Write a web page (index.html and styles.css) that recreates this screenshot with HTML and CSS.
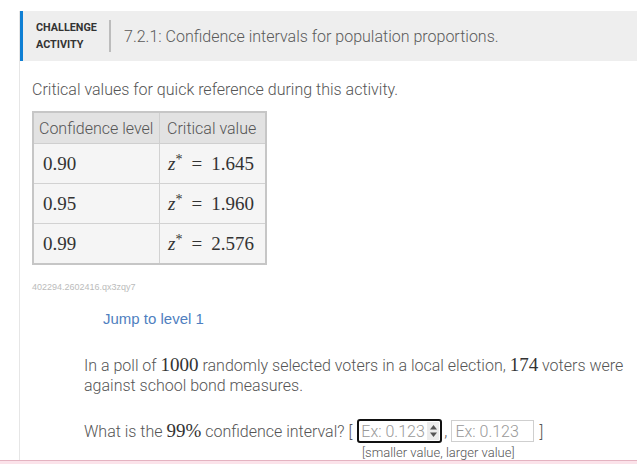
FILE: index.html
```html
<!DOCTYPE html>
<html>
<head>
<meta charset="utf-8">
<link rel="stylesheet" href="styles.css">
</head>
<body>
<div class="card">
  <div class="header">
    <div class="label">CHALLENGE<br>ACTIVITY</div>
    <div class="divider"></div>
    <div class="title">7.2.1: Confidence intervals for population proportions.</div>
  </div>
  <div class="content">
    <p class="intro">Critical values for quick reference during this activity.</p>
    <table class="crit">
      <thead>
        <tr><th class="c1">Confidence level</th><th class="c2">Critical value</th></tr>
      </thead>
      <tbody>
        <tr><td class="num">0.90</td><td class="num"><span class="mi">z</span><sup>*</sup><span class="eq">=</span>1.645</td></tr>
        <tr><td class="num">0.95</td><td class="num"><span class="mi">z</span><sup>*</sup><span class="eq">=</span>1.960</td></tr>
        <tr><td class="num">0.99</td><td class="num"><span class="mi">z</span><sup>*</sup><span class="eq">=</span>2.576</td></tr>
      </tbody>
    </table>
    <div class="ident">402294.2602416.qx3zqy7</div>
    <div class="jump">Jump to level 1</div>
    <div class="question">
      <p class="para">In a poll of <span class="m">1000</span> randomly selected voters in a local election, <span class="m">174</span> voters were against school bond measures.</p>
      <div class="ask">
        <span>What is the <span class="m">99%</span> confidence interval? [</span>
        <span class="inp focus"><span class="ph">Ex: 0.123</span><span class="spin"><svg width="9" height="14" viewBox="0 0 9 14"><path d="M4.5 1 L8 5.5 L1 5.5 Z" fill="#555"/><path d="M4.5 13 L8 8.5 L1 8.5 Z" fill="#555"/></svg></span></span>
        <span class="comma">,</span>
        <span class="inp plain"><span class="ph">Ex: 0.123</span></span>
        <span class="close">]</span>
      </div>
      <div class="hint">[smaller value, larger value]</div>
    </div>
  </div>
</div>
<div class="pink"></div>
</body>
</html>
```
FILE: styles.css
```css
html, body {
  margin: 0;
  padding: 0;
  background: #fff;
}
body {
  font-family: Roboto, "Liberation Sans", sans-serif;
  font-weight: 300;
  color: #555;
  overflow: hidden;
  height: 464px;
}
.card {
  margin-top: 11px;
  margin-left: 19px;
  border-left: 1px solid #e6e6e6;
  height: 449px;
}
.header {
  display: flex;
  align-items: center;
  height: 50px;
  background: #eeeeee;
  border-left: 3px solid #0f7fd4;
  padding-left: 13px;
}
.label {
  font-weight: 700;
  font-size: 10.8px;
  line-height: 17px;
  color: #333;
  width: 62px;
}
.divider {
  width: 2px;
  height: 32px;
  background: #bcbcbc;
  margin-left: 11px;
  margin-right: 13px;
}
.title {
  font-size: 16px;
  color: #5a5a5a;
}
.content {
  padding-left: 12px;
}
.intro {
  margin: 19px 0 0 0;
  font-size: 16px;
  line-height: 20px;
}
.crit {
  margin-top: 11px;
  border-collapse: collapse;
  border: 2px solid #c6c6c6;
}
.crit th {
  background: #e2e2e2;
  font-weight: 300;
  font-size: 16px;
  height: 30px;
  padding: 0 4px 0 5px;
  text-align: left;
  border: 1px solid #cfcfcf;
  color: #555;
}
.crit th.c1 { width: 116px; }
.crit th.c2 { width: 92px; padding-left: 7px; padding-right: 6px; }
.crit td {
  background: #f5f5f5;
  height: 39px;
  border: 1px solid #d2d2d2;
  padding: 0 8px;
}
.num {
  font-family: "Liberation Serif", "DejaVu Serif", serif;
  font-weight: 400;
  font-size: 19px;
  color: #333;
}
.crit td:first-child { padding-left: 9px; }
.crit td:last-child { padding-left: 8px; white-space: nowrap; }
.mi { font-style: italic; }
.crit sup {
  font-size: 14px;
  vertical-align: 6px;
  line-height: 0;
}
.eq { margin: 0 9px 0 9px; }
.ident {
  margin-top: 17px;
  font-family: "Liberation Sans", Arial, sans-serif;
  font-weight: 400;
  font-size: 9px;
  color: #bbb;
  line-height: 11px;
}
.jump {
  margin-top: 17px;
  margin-left: 71px;
  font-family: "Liberation Sans", Arial, sans-serif;
  font-weight: 400;
  font-size: 15px;
  line-height: 18px;
  color: #4f7fc0;
}
.question {
  margin-left: 52px;
  margin-top: 27px;
  width: 550px;
}
.para {
  margin: 0;
  font-size: 16px;
  line-height: 20px;
}
.m {
  font-family: "Liberation Serif", "DejaVu Serif", serif;
  font-weight: 400;
  font-size: 19px;
  line-height: 1;
  color: #333;
}
.ask {
  margin-top: 23px;
  display: flex;
  align-items: center;
  font-size: 16px;
  height: 24px;
  white-space: pre;
}
.inp {
  display: inline-flex;
  align-items: center;
  box-sizing: border-box;
  font-size: 16px;
  color: #999;
}
.inp.focus {
  width: 85px;
  height: 24px;
  border: 2px solid #111;
  border-radius: 3px;
  margin-left: 5px;
  padding-left: 2px;
}
.inp.plain {
  width: 83px;
  height: 22px;
  border: 1px solid #cfcfcf;
  padding-left: 3px;
  margin-left: 4px;
}
.spin {
  margin-left: auto;
  width: 12px;
  height: 18px;
  background: #ececec;
  display: flex;
  align-items: center;
  justify-content: center;
  margin-right: 1px;
}
.comma { margin-left: 2px; }
.close { margin-left: 5px; }
.hint {
  margin-left: 278px;
  margin-top: 2px;
  font-size: 13px;
  line-height: 15px;
  color: #555;
}
.pink {
  height: 3px;
  border-top: 1px solid #e4b3c1;
  background: #fbe3ea;
}
```
